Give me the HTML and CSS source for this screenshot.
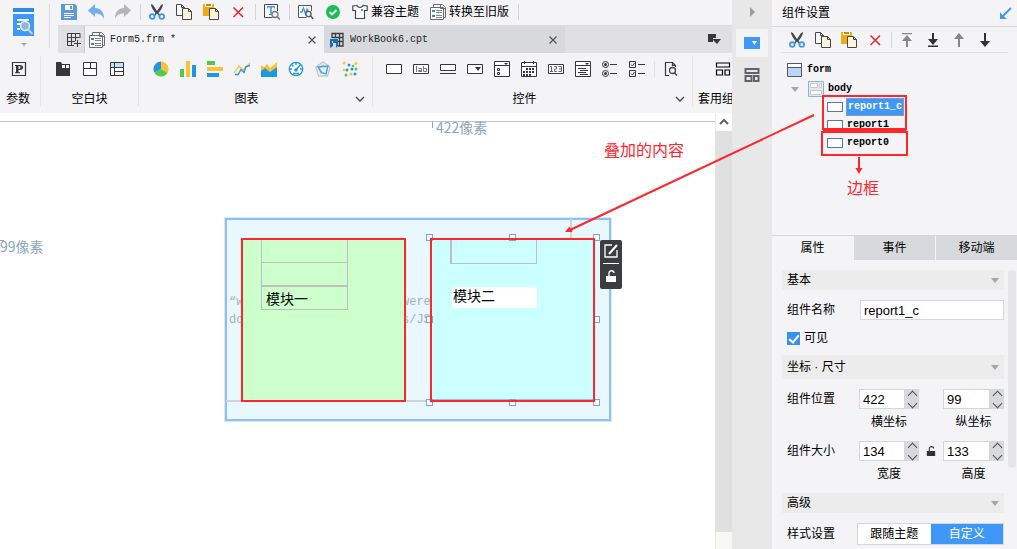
FILE: index.html
```html
<!DOCTYPE html>
<html lang="zh-CN">
<head>
<meta charset="utf-8">
<title>Form5.frm</title>
<link rel="stylesheet" href="styles.css">
</head>
<body>
<svg class="sprite" aria-hidden="true">
  <symbol id="save" viewBox="0 0 16 16"><path fill="#5b9bdc" d="M0 0h14l2 2v14H0z"/><path fill="#fff" d="M4 1h8v5H4zM3 9h10v1H3zM3 11h10v1H3zM3 13h7v1H3z"/><path fill="#5b9bdc" d="M9 2h2v3H9z"/></symbol>
  <symbol id="undo" viewBox="0 0 16 16"><path fill="#72aef0" d="M0 6.500 7 0v4c6 0 9 4 9 11-2-4-4-5.500-9-5.500V13z"/></symbol>
  <symbol id="redo" viewBox="0 0 16 16"><path fill="#b5b5b7" d="M16 6.500 9 0v4C3 4 0 8 0 15c2-4 4-5.500 9-5.500V13z"/></symbol>
  <symbol id="cut" viewBox="0 0 16 16"><path fill="#45484d" d="M2 0 4 1l4 6 4-6 2-1c0 3-2 6-4.500 9l2 2-1.500 1-2-2.500L6 12l-1.500-1 2-2C4 6 2 3 2 0z"/><g fill="none" stroke="#3d98f7" stroke-width="1.800"><circle cx="3.200" cy="12.500" r="2.400"/><circle cx="12.800" cy="12.500" r="2.400"/></g></symbol>
  <symbol id="copy" viewBox="0 0 16 16"><g fill="#fff" stroke="#45484d"><path d="M.5.5h5l3 3v8h-8z"/><path d="M5.500.5v3h3" fill="none"/></g><path fill="#fff5da" stroke="#45484d" d="M6.500 4.500h6l3 3v8h-9z"/><path d="M12.500 4.500v3h3" fill="none" stroke="#45484d"/></symbol>
  <symbol id="paste" viewBox="0 0 16 16"><path fill="#f2ab13" d="M0 0h11v12H0z"/><path fill="#fff" d="M2 0h7v3H2z"/><path fill="#d98300" d="M3 0h5v2H3z"/><path fill="#fff5da" stroke="#45484d" d="M6.500 4.500h6l3 3v8h-9z"/><path d="M12.500 4.500v3h3" fill="none" stroke="#45484d"/></symbol>
  <symbol id="del" viewBox="0 0 16 16"><path d="m3.500 3.500 9.500 9.500M13 3.500 3.500 13" fill="none" stroke="#e8232b" stroke-width="1.500"/></symbol>
  <symbol id="find" viewBox="0 0 16 16"><path fill="#fff" stroke="#45484d" d="M13.500 7V.5H.5v13h8"/><path fill="#3d98f7" d="M3 2h8v2.500h-1V3.500H7.800V10H9v1H5v-1h1.200V3.500H4v1H3z"/><circle cx="11" cy="10.500" r="3" fill="#f4f4f7" stroke="#777b80" stroke-width="1.300"/><path d="m13 12.500 3 3" stroke="#777b80" stroke-width="1.600"/></symbol>
  <symbol id="wave" viewBox="0 0 16 16"><path fill="#fff" stroke="#55595e" d="M13.500 7V1.500H.5v12h8"/><path fill="none" stroke="#3d98f7" stroke-width="1.300" d="M2 8h2l1.500-4 2 6L9 5l1 2"/><circle cx="10.500" cy="10" r="2.600" fill="#f4f4f7" stroke="#55595e" stroke-width="1.300"/><path d="m12.500 12 2.800 3" stroke="#55595e" stroke-width="1.600"/></symbol>
  <symbol id="ok" viewBox="0 0 16 16"><circle cx="8" cy="8" r="7" fill="#18bf50"/><path d="m4.500 8 2.500 2.500L11.500 6" fill="none" stroke="#fff" stroke-width="1.800"/></symbol>
  <symbol id="shirt" viewBox="0 0 16 16"><path fill="#fff" stroke="#45484d" stroke-width="1.200" d="M5 1.500.8 2v4.500H3.500v8h9v-8h2.700V2L11 1.500C10 4 6 4 5 1.500z"/><path fill="#3d98f7" d="M9 5h2v2H9z"/></symbol>
  <symbol id="form" viewBox="0 0 16 16"><path fill="none" stroke="#686c70" d="M3.500 3V.5h9l3 3v10H14"/><path fill="#fff" stroke="#686c70" d="M.5 3.500h13v12H.5z"/><path stroke="#686c70" fill="none" d="M10.500 1v3.500H15"/><path fill="#3d83c9" d="M2 6h3v2H2zM2 11h3v2H2z"/><path stroke="#85898d" d="M6 6.500h6M6 8.500h6M6 11.500h6M6 13.500h6"/></symbol>
  <symbol id="gridplus" viewBox="0 0 16 16"><path fill="none" stroke="#3a3c40" d="M14 6V1.500H1.500v12H8M1.500 5.500h12M1.500 9.500H9M5.500 1.500v12M9.500 1.500V9M11.500 8v7M8 11.500h7"/></symbol>
  <symbol id="book" viewBox="0 0 16 16"><path fill="none" stroke="#3a3c40" stroke-width="1.300" d="M3 6V1.500h11V14H9M3 5.500h11M6.500 1.500v4M10.500 1.500V14M9 9.500h5"/><path fill="#1470b8" d="M1 7h8v7l-2 2v-5H4v3l-3 2z"/><path fill="#d8d9dd" d="M3 9h1v2H3z"/></symbol>
  <symbol id="x" viewBox="0 0 16 16"><path d="m4.500 4.500 7 7m0-7-7 7" fill="none" stroke="#505256" stroke-width="1.200"/></symbol>
  <symbol id="list" viewBox="0 0 16 16"><path fill="#36383c" d="M2 2h8v4H7v4H2z"/><path fill="#36383c" d="M6 7h9l-4 5z"/></symbol>
  <symbol id="param" viewBox="0 0 16 16"><path fill="none" stroke="#34363a" stroke-width="1.200" d="M1.500 1.500h13v13h-13z"/><path fill="#34363a" d="M4 4h5c4 0 4 5 0 5H7.500v2.300H9v1H4v-1h1V5H4zm3.500 1v3H8c2 0 2-3 0-3z"/></symbol>
  <symbol id="tabs" viewBox="0 0 16 16"><path fill="#36383c" d="M1 1h5l1 2h8v12H1z"/><path fill="#fff" d="M7 4h3v3H7zM11 4h3v3h-3z"/></symbol>
  <symbol id="blocks" viewBox="0 0 16 16"><path fill="#fff" stroke="#36383c" d="M1.500 1.500h13v13h-13zM1.500 7.500h13M8.500 1.500v6"/></symbol>
  <symbol id="blocks2" viewBox="0 0 16 16"><path fill="#fff" d="M1 1h14v14H1z"/><path fill="#bce4fa" d="M1 1h14v5H1z"/><path fill="none" stroke="#36383c" d="M1.500 1.500h13v13h-13zM1.500 6.500h13M5.500 1.500v13M5.500 10.500h9"/></symbol>
  <symbol id="pie" viewBox="0 0 16 16"><path fill="#2097e4" d="M8 8V.5A7.500 7.500 0 0 0 1.500 11.700z"/><path fill="#fcc236" d="M8 8V.5a7.500 7.500 0 0 1 6.500 11.200z"/><path fill="#54c84d" d="m8 8 6.500 3.700a7.500 7.500 0 0 1-13 0z"/></symbol>
  <symbol id="bars" viewBox="0 0 16 16"><path fill="#54c84d" d="M0 8h4v8H0z"/><path fill="#fcc236" d="M6 0h4v16H6z"/><path fill="#2097e4" d="M12 4h4v12h-4z"/></symbol>
  <symbol id="hbars" viewBox="0 0 16 16"><path fill="#54c84d" d="M0 0h8v4H0z"/><path fill="#fcc236" d="M0 6h16v4H0z"/><path fill="#2097e4" d="M0 12h12v4H0z"/></symbol>
  <symbol id="lines" viewBox="0 0 16 16"><path fill="none" stroke="#fcc236" stroke-width="1.300" d="m0 12 5-7 4 4 7-7"/><path fill="none" stroke="#2097e4" stroke-width="1.300" d="M1 13.500h3l3-5 3 3 2-6 4-1"/></symbol>
  <symbol id="area" viewBox="0 0 16 16"><path fill="#fcc236" d="m0 4 3 2 3-3 3 4 7-6v10H0z"/><path fill="#2097e4" d="m0 10 4-3 5 4 7-5v10H0z"/></symbol>
  <symbol id="gauge" viewBox="0 0 16 16"><circle cx="8" cy="8" r="6.700" fill="#fff" stroke="#2097e4" stroke-width="1.300"/><path fill="none" stroke="#2097e4" stroke-width="1.400" d="M8 1v3M1 8h3m8 0h3M3.500 3.500l2 2M12.500 3.500 8 9M5 12.500h6"/><circle cx="8" cy="9" r="1.800" fill="#2097e4"/></symbol>
  <symbol id="radar" viewBox="0 0 16 16"><path fill="none" stroke="#c2c5c9" stroke-width="1.300" d="m8 1 7 5-2.500 9h-9L1 6zM8 4l4 3-1.500 5h-5L4 7z"/><path fill="#d8effb" fill-opacity=".6" stroke="#43a8e8" stroke-width="1.400" d="m3 6 10-1-2 8-4-1z"/></symbol>
  <symbol id="scatter" viewBox="0 0 16 16"><g fill="#2097e4"><circle cx="7" cy="4" r="1.500"/><circle cx="10" cy="8" r="1.500"/><circle cx="5" cy="9" r="1.500"/><circle cx="13" cy="13" r="1.500"/></g><g fill="#fcc236"><circle cx="2" cy="2" r="1.500"/><circle cx="14" cy="2.500" r="1.500"/><circle cx="2" cy="9" r="1.300"/><circle cx="9" cy="13" r="1.500"/></g><g fill="#54c84d"><circle cx="11" cy="5" r="1.300"/><circle cx="14" cy="8" r="1.500"/><circle cx="4" cy="14" r="1.500"/></g></symbol>
  <symbol id="w-text" viewBox="0 0 16 16"><path fill="#fff" stroke="#36383c" d="M.5 3.500h15v9H.5z"/></symbol>
  <symbol id="w-label" viewBox="0 0 16 16"><path fill="#fff" stroke="#36383c" d="M.5 3.500h15v9H.5z"/><path fill="none" stroke="#77797d" d="M3.500 5v6M8.500 11V7.500h-3M8 9.500H5.500v1h3M10.500 5v5.500h3v-3h-3"/></symbol>
  <symbol id="w-area" viewBox="0 0 16 16"><path fill="#fff" stroke="#36383c" d="M.5 3.500h15v6H.5z"/><path stroke="#36383c" d="M0 12.500h16"/></symbol>
  <symbol id="w-combo" viewBox="0 0 16 16"><path fill="#fff" stroke="#36383c" d="M.5 3.500h15v9H.5z"/><path fill="#36383c" d="M8 6h6l-3 4z"/></symbol>
  <symbol id="w-tree" viewBox="0 0 16 16"><path fill="#fff" stroke="#36383c" d="M.5.5h15v15H.5zM.5 4.500h15M3.500 7.500h2v2h-2zM3.500 11.500h2v2h-2z"/><path fill="#36383c" d="M10 2h4l-2 2z"/></symbol>
  <symbol id="w-date" viewBox="0 0 16 16"><path fill="#fff" stroke="#36383c" d="M.5 1.500h15v14H.5zM.5 5.500h15M3.500 0v3M12.500 0v3"/><path stroke="#36383c" stroke-width="2" stroke-dasharray="2 1" d="M5 8h8M2 11h11M2 14h8"/></symbol>
  <symbol id="w-num" viewBox="0 0 16 16"><path fill="#fff" stroke="#36383c" d="M.5 3.500h15v9H.5z"/><path fill="none" stroke="#66686c" d="M2 5.500h1.500v5M2 10.500h3M6 5.500h2.500v2.500h-2v2.500H9M10.500 5.500h3v5h-3M11 8h2.500"/></symbol>
  <symbol id="w-list" viewBox="0 0 16 16"><path fill="#fff" stroke="#36383c" d="M.5.5h15v15H.5zM.5 4.500h15M3 7.500h8M5 9.500h8M3 11.500h8M5 13.500h8"/><path fill="#36383c" d="M10 2h4l-2 2z"/></symbol>
  <symbol id="w-radio" viewBox="0 0 16 16"><g fill="none" stroke="#36383c"><circle cx="3.500" cy="3.500" r="3"/><circle cx="3.500" cy="12.500" r="3"/><path d="M8 3.500h7M8 12.500h7"/></g><circle cx="3.500" cy="3.500" r="1.500" fill="#36383c"/><circle cx="3.500" cy="12.500" r="1.500" fill="#36383c"/></symbol>
  <symbol id="w-check" viewBox="0 0 16 16"><path fill="none" stroke="#36383c" d="M.5.5h6v6h-6zM.5 9.500h6v6h-6zM9 3.500h7M9 12.500h7M2 3.500l1.500 1.500L5.500 2M2 12.500 3.500 14l2-3"/></symbol>
  <symbol id="w-query" viewBox="0 0 16 16"><path fill="none" stroke="#36383c" stroke-width="1.200" d="M6 14.500H2.500V1.500h7l3 3V6M9.500 1.500v3h3"/><circle cx="9.500" cy="9.500" r="3" fill="none" stroke="#45484d" stroke-width="1.300"/><path stroke="#45484d" stroke-width="1.600" d="m11.500 12 2.500 2.500"/></symbol>
  <symbol id="layout" viewBox="0 0 16 16"><path fill="none" stroke="currentColor" stroke-width="var(--line, 1.200)" d="M1.500 2h13v4h-13zM1.500 9h6v5h-6zM10 9h4.500v5H10z"/></symbol>
  <symbol id="chev" viewBox="0 0 16 16"><path fill="none" stroke="#45484d" stroke-width="1.400" d="m4 6 4 4 4-4"/></symbol>
  <symbol id="up" viewBox="0 0 16 16"><path fill="currentColor" d="M7 15V7H3l5-6 5 6H9v8z"/></symbol>
  <symbol id="top" viewBox="0 0 16 16"><path fill="#85878b" d="M3 1h10v1.300H3zM7 15V9H3l5-6 5 6H9v6z"/></symbol>
  <symbol id="bottom" viewBox="0 0 16 16"><path fill="#303236" d="M3 13.500h10V15H3zM7 1v6H3l5 6 5-6H9V1z"/></symbol>
  <symbol id="lock" viewBox="0 0 12 14"><path fill="currentColor" d="M1 7h10v6H1z"/><path fill="none" stroke="currentColor" stroke-width="1.300" d="M4 8V4c0-3 5-3 5 0"/></symbol>
</svg>

<div class="app">
  <main class="designer">
    <header class="top">
      <button class="template" aria-label="模板">
        <svg viewBox="0 0 22 40"><path fill="#2f89e8" d="M0 0h21v4H0z"/><path fill="#3d98f7" d="M0 6h21v22H0z"/><path stroke="#fff" stroke-width="2" d="M4 12h12M4 16h4M4 21h3"/><circle cx="12" cy="18" r="4.500" fill="#8fb6dc" stroke="#e8eef5" stroke-width="1.500"/><path stroke="#c9d3de" stroke-width="2" d="m15.500 22 4 4"/><path fill="#a5a5a7" d="M8 35h6l-3 3z"/></svg>
      </button>
      <div class="top-main">
        <div class="toolbar">
          <button aria-label="保存"><svg><use href="#save"/></svg></button>
          <button aria-label="撤销"><svg><use href="#undo"/></svg></button>
          <button aria-label="重做"><svg><use href="#redo"/></svg></button>
          <i class="sep"></i>
          <button aria-label="剪切"><svg><use href="#cut"/></svg></button>
          <button aria-label="复制"><svg><use href="#copy"/></svg></button>
          <button aria-label="粘贴"><svg><use href="#paste"/></svg></button>
          <button aria-label="删除"><svg><use href="#del"/></svg></button>
          <i class="sep"></i>
          <button aria-label="查找"><svg><use href="#find"/></svg></button>
          <i class="sep"></i>
          <button aria-label="检测"><svg><use href="#wave"/></svg></button>
          <button aria-label="通过"><svg><use href="#ok"/></svg></button>
          <button><svg><use href="#shirt"/></svg>兼容主题</button>
          <button><svg><use href="#form"/></svg>转换至旧版</button>
          <i class="sep"></i>
        </div>
        <div class="files">
          <button class="new" aria-label="新建"><svg><use href="#gridplus"/></svg></button>
          <div class="file active"><svg><use href="#form"/></svg><span>Form5.frm *</span><button aria-label="关闭 Form5.frm"><svg><use href="#x"/></svg></button></div>
          <div class="file"><svg><use href="#book"/></svg><span>WorkBook6.cpt</span><button aria-label="关闭 WorkBook6.cpt"><svg><use href="#x"/></svg></button></div>
          <button class="more" aria-label="全部文件"><svg><use href="#list"/></svg></button>
        </div>
      </div>
    </header>

    <section class="ribbon">
      <div class="group g-param"><div class="icons"><button aria-label="参数面板"><svg><use href="#param"/></svg></button></div><div class="caption">参数</div></div>
      <div class="group g-blank"><div class="icons"><button aria-label="标签块"><svg><use href="#tabs"/></svg></button><button aria-label="绝对画布块"><svg><use href="#blocks"/></svg></button><button aria-label="报表块"><svg><use href="#blocks2"/></svg></button></div><div class="caption">空白块</div></div>
      <div class="group g-chart"><div class="icons"><button aria-label="饼图"><svg><use href="#pie"/></svg></button><button aria-label="柱形图"><svg><use href="#bars"/></svg></button><button aria-label="条形图"><svg><use href="#hbars"/></svg></button><button aria-label="折线图"><svg><use href="#lines"/></svg></button><button aria-label="面积图"><svg><use href="#area"/></svg></button><button aria-label="仪表盘"><svg><use href="#gauge"/></svg></button><button aria-label="雷达图"><svg><use href="#radar"/></svg></button><button aria-label="散点图"><svg><use href="#scatter"/></svg></button></div><div class="caption">图表<button aria-label="更多图表"><svg><use href="#chev"/></svg></button></div></div>
      <div class="group g-widget"><div class="icons"><button aria-label="文本"><svg><use href="#w-text"/></svg></button><button aria-label="标签"><svg><use href="#w-label"/></svg></button><button aria-label="按钮"><svg><use href="#w-area"/></svg></button><button aria-label="下拉框"><svg><use href="#w-combo"/></svg></button><button aria-label="下拉树"><svg><use href="#w-tree"/></svg></button><button aria-label="日期"><svg><use href="#w-date"/></svg></button><button aria-label="数字"><svg><use href="#w-num"/></svg></button><button aria-label="列表"><svg><use href="#w-list"/></svg></button><button aria-label="单选"><svg><use href="#w-radio"/></svg></button><button aria-label="复选"><svg><use href="#w-check"/></svg></button><i class="sep"></i><button aria-label="查询"><svg><use href="#w-query"/></svg></button></div><div class="caption">控件<button aria-label="更多控件"><svg><use href="#chev"/></svg></button></div></div>
      <div class="group g-suite"><div class="icons"><button aria-label="套用组件"><svg><use href="#layout"/></svg></button></div><div class="caption">套用组</div></div>
    </section>

    <section class="workspace">
      <div class="canvas">
        <div class="measure measure-x">422像素</div>
        <div class="measure measure-y">99像素</div>
        <div class="body-block">
          <div class="report0"></div>
          <span class="hint hint-a">“w</span><span class="hint hint-b">do</span>
          <span class="hint hint-c">were</span><span class="hint hint-d">s/JS</span>
          <div class="module green"><div class="cell"></div><div class="cell"></div><div class="cell">模块一</div></div>
          <div class="module cyan"><div class="cell"></div><div class="title">模块二</div></div>
          <i class="handle h1"></i><i class="handle h2"></i><i class="handle h3"></i><i class="handle h4"></i><i class="handle h5"></i><i class="handle h6"></i><i class="handle h7"></i><i class="handle h8"></i>
          <div class="quick">
            <button aria-label="编辑"><svg viewBox="0 0 16 16"><path fill="none" stroke="#fff" stroke-width="1.300" d="M9 2H2v12h12V7"/><path stroke="#fff" stroke-width="2" d="m6 11 8-9"/></svg></button>
            <button aria-label="锁定"><svg><use href="#lock"/></svg></button>
          </div>
        </div>
      </div>
      <div class="scroll"><button aria-label="向上滚动"><svg viewBox="0 0 16 16"><path fill="none" stroke="#606266" stroke-width="2" d="m4 10 4-4 4 4"/></svg></button><div class="track"></div><div class="rest"></div></div>
    </section>
  </main>

  <nav class="rail">
    <button class="fold" aria-label="收起"><svg viewBox="0 0 16 16"><path fill="#9b9b9d" d="m6 3 5 5-5 5z"/></svg></button>
    <button class="current" aria-label="组件设置"><svg viewBox="0 0 16 16"><path fill="#3d98f7" d="M0 2h16v12H0z"/><path fill="#fff" d="M8 6h5l-2.500 4z"/></svg></button>
    <button class="lib" aria-label="组件库"><svg><use href="#layout"/></svg></button>
  </nav>

  <aside class="panel">
    <h1>组件设置<button aria-label="弹出"><svg viewBox="0 0 16 16"><path fill="none" stroke="#3d98f7" stroke-width="1.800" d="m13 3-9 9"/><path fill="#3d98f7" d="M2 7v7h7l-2.500-2-2.500-2.500z"/></svg></button></h1>
    <div class="tree-tools">
      <button aria-label="剪切"><svg><use href="#cut"/></svg></button>
      <button aria-label="复制"><svg><use href="#copy"/></svg></button>
      <button aria-label="粘贴"><svg><use href="#paste"/></svg></button>
      <button aria-label="删除"><svg><use href="#del"/></svg></button>
      <i class="sep"></i>
      <button aria-label="置于顶层"><svg><use href="#top"/></svg></button>
      <button aria-label="置于底层"><svg><use href="#bottom"/></svg></button>
      <button class="raise" aria-label="上移一层"><svg><use href="#up"/></svg></button>
      <button class="lower" aria-label="下移一层"><svg><use href="#up"/></svg></button>
    </div>
    <ul class="tree">
      <li class="node root"><svg viewBox="0 0 16 16"><path fill="#bcd4f5" stroke="#55585c" d="M.5 1.500h14v13H.5z"/><path fill="#fff" stroke="#55585c" d="M.5 1.500h14v4H.5z"/></svg><span>form</span></li>
      <li class="node branch"><svg class="twist" viewBox="0 0 8 8"><path fill="#a5a5a7" d="M0 2h8L4 7z"/></svg><svg viewBox="0 0 16 16"><path fill="#e6e9ec" stroke="#86b7d2" d="M.5.5h15v15H.5z"/><path fill="#fff" stroke="#c6c8ca" d="M2.500 2.500h7v4h-7zM11.500 2.500h2v4h-2zM2.500 9.500h11v4h-11z"/></svg><span>body</span></li>
      <li class="node leaf selected"><i></i><span>report1_c</span></li>
      <li class="node leaf"><i></i><span>report1</span></li>
      <li class="node leaf"><i></i><span>report0</span></li>
    </ul>
    <div class="tabs" role="tablist">
      <button role="tab" aria-selected="true">属性</button><button role="tab" aria-selected="false">事件</button><button role="tab" aria-selected="false">移动端</button>
    </div>
    <div class="props">
      <form class="fields">
        <button type="button" class="section">基本</button>
        <div class="row name"><label for="name">组件名称</label><input id="name" type="text" value="report1_c"></div>
        <label class="visible"><input type="checkbox" checked>可见</label>
        <button type="button" class="section tall">坐标 · 尺寸</button>
        <div class="row pair">
          <span>组件位置</span>
          <div class="spin"><input id="px" type="text" value="422"><div><button type="button" aria-label="增加"></button><button type="button" aria-label="减少"></button></div></div>
          <span></span>
          <div class="spin"><input id="py" type="text" value="99"><div><button type="button" aria-label="增加"></button><button type="button" aria-label="减少"></button></div></div>
          <label class="under first" for="px">横坐标</label><label class="under" for="py">纵坐标</label>
        </div>
        <div class="row pair">
          <span>组件大小</span>
          <div class="spin"><input id="sw" type="text" value="134"><div><button type="button" aria-label="增加"></button><button type="button" aria-label="减少"></button></div></div>
          <button type="button" class="ratio" aria-label="锁定比例"><svg><use href="#lock"/></svg></button>
          <div class="spin"><input id="sh" type="text" value="133"><div><button type="button" aria-label="增加"></button><button type="button" aria-label="减少"></button></div></div>
          <label class="under first" for="sw">宽度</label><label class="under" for="sh">高度</label>
        </div>
        <button type="button" class="section">高级</button>
        <div class="row style"><span>样式设置</span><div class="segment"><button type="button">跟随主题</button><button type="button" class="on">自定义</button></div></div>
      </form>
      <div class="thumb"></div>
    </div>
  </aside>

  <svg class="notes" viewBox="0 0 1017 549">
    <g fill="none" stroke="#ff262c" stroke-width="2">
      <path d="M242 239h163v162H242zM431 239h163v162H431zM823 96h83v33h-83zM822 132h85v23h-85z"/>
      <path d="M823 130.500h83M814 115 570 230M859 157v13"/>
    </g>
    <path fill="#ff262c" d="m565 232 4.500-5.500 3 5.500zM855.500 168h7l-3.500 6z"/>
    <g fill="#ff262c" class="note-text"><text x="604" y="156">叠加的内容</text><text x="847" y="194">边框</text></g>
  </svg>
</div>
</body>
</html>
```
FILE: styles.css
```css
* { box-sizing: border-box; }
body { margin: 0; font: 12px/16px "Liberation Sans", "Noto Sans CJK SC", sans-serif; color: #000; background: #fff; }
button { border: 0; padding: 0; margin: 0; background: none; font: inherit; color: inherit; }
svg { display: block; flex: none; width: 16px; height: 16px; }
.sprite { position: absolute; width: 0; height: 0; }
.app { position: relative; display: grid; grid-template-columns: minmax(0, 1fr) 40px 245px; height: 100vh; overflow: hidden; }
.sep { flex: none; width: 1px; height: 16px; background: #d4d4d6; }

.designer { display: flex; flex-direction: column; min-width: 0; }
.top { display: flex; background: #f4f4f7; }
.template { width: 50px; padding: 3px 0 0 13px; border-right: 1px solid #dcdcde; margin: 4px 8px 5px 0; }
.template svg { width: 22px; height: 40px; }
.top-main { flex: 1; min-width: 0; }
.toolbar { display: flex; align-items: center; gap: 11px; height: 25px; padding: 0 0 1px 3px; }
.toolbar button { display: flex; align-items: center; gap: 3px; }
.toolbar .sep { margin: 0 -3px 0 -2px; }
.files { display: flex; height: 28px; background: #e0e0e2; border-top: 1px solid #dcdcde; }
.new { width: 27px; padding-left: 8px; border-right: 1px solid #cacacc; }
.file { display: flex; align-items: center; gap: 5px; width: 240px; padding: 0 4px; background: #d8d9dd; font: 10px/16px "Liberation Mono", monospace; color: #222; }
.file.active { background: #f4f4f7; border-right: 1px solid #d8d9dd; }
.file button { margin-left: auto; }
.more { margin-left: auto; padding: 0 10px; }

.ribbon { display: flex; height: 60px; background: #f4f4f7; overflow: hidden; }
.group { flex: none; position: relative; margin: 3px 0 7px; border-right: 1px solid #e6e5dc; }
.icons { display: flex; gap: 11px; height: 26px; align-items: center; }
.icons .sep { margin: 0 -3px 0 -2px; background: #e2e2da; }
.caption { display: flex; justify-content: center; align-items: center; height: 16px; margin-top: 9px; white-space: nowrap; }
.caption button { position: absolute; right: 4px; }
.g-param { width: 41px; }
.g-param .icons { padding-left: 11px; }
.g-param .caption { padding-right: 4px; }
.g-blank { width: 98px; }
.g-blank .icons { padding-left: 14px; }
.g-chart { width: 234px; }
.g-chart .icons { padding-left: 14px; }
.g-chart .caption { padding-right: 18px; }
.g-widget { width: 320px; }
.g-widget .icons { padding-left: 13px; }
.g-widget .caption { padding-right: 16px; }
.g-suite { width: 60px; border: 0; }
.g-suite .icons { padding-left: 22px; }
.g-suite .caption { justify-content: flex-start; padding-left: 5px; }

.workspace { flex: 1; display: flex; min-height: 0; }
.canvas { position: relative; flex: 1; margin-top: 8px; border-top: 1px solid #c4c4c6; }
.measure { position: absolute; font: 14px/20px "Noto Sans CJK SC", sans-serif; color: #8ba5bf; }
.measure-x { left: 436px; top: -5px; }
.measure-x::before { content: ""; position: absolute; left: -4px; top: 5px; width: 1px; height: 6px; background: #8ba5bf; }
.measure-y { left: 0; top: 114px; }
.measure-y::before { content: ""; position: absolute; top: 4px; left: 0; width: 4px; height: 1px; background: #8ba5bf; }
.body-block { position: absolute; left: 225px; top: 96px; width: 386px; height: 203px; background: #e9f7fe; border: 2px solid #8dc0f8; outline: 1px solid #dceaf2; }
.body-block > * { position: absolute; }
.report0 { left: -1px; top: -1px; width: 346px; height: 183px; border: solid #ccd5da; border-width: 0 2px 2px 0; }
.module { width: 162px; height: 161px; top: 20px; }
.green { left: 15px; background: #ccffcc; }
.cyan { left: 204px; background: #ccffff; border-bottom: 2px solid #8dc0f8; }
.cell { width: 87px; height: 23px; margin-left: 19px; border: 1px solid #bdbdc2; border-top-width: 0; padding-left: 4px; font: 14px/22px "Noto Sans CJK SC", sans-serif; }
.green .cell:nth-child(2) { height: 24px; border-bottom-width: 2px; }
.cyan .cell { height: 24px; border-left-width: 2px; }
.title { width: 85px; height: 21px; margin: 23px 0 0 21px; padding-left: 1px; background: #fff; font: 14px/16px "Noto Sans CJK SC", sans-serif; }
.hint { font: 12px/14px "Liberation Mono", monospace; color: #a4b1b9; }
.hint-a { left: 2px; top: 75px; }
.hint-b { left: 2px; top: 93px; }
.hint-c { left: 175px; top: 75px; }
.hint-d { left: 175px; top: 93px; }
.handle { width: 7px; height: 7px; background: #fff; border: 1px solid #88a2bd; }
.h1, .h4, .h6 { left: 199px; }
.h2, .h7 { left: 282px; }
.h3, .h5, .h8 { left: 366px; }
.h1, .h2, .h3 { top: 14px; }
.h4, .h5 { top: 96px; }
.h6, .h7, .h8 { top: 179px; }
.quick { left: 373px; top: 20px; width: 22px; padding: 3px; background: #3a3e43; border-radius: 2px; color: #fff; }
.quick button { display: block; width: 16px; }
.quick button + button { border-top: 1px solid #fff; margin-top: 4px; padding: 5px 2px 3px; }
.quick button + button svg { width: 12px; height: 14px; }
.scroll { display: flex; flex-direction: column; width: 17px; border-left: 1px solid #e7e7df; background: #f8f8f7; }
.scroll button { height: 18px; background: #fff; }
.track { flex: 1; background: #e0e0e0; }
.rest { height: 17px; }

.rail { background: #e8e8e8; display: flex; flex-direction: column; padding: 0 4px; }
.rail button { display: flex; justify-content: center; align-items: center; height: 28px; }
.rail .fold { height: 24px; margin-bottom: 5px; }
.rail .current { width: 32px; background: #f4f4f7; }
.rail .lib { margin-top: 4px; color: #606268; --line: 2; }

.panel { display: flex; flex-direction: column; min-height: 0; background: #f4f4f7; }
.panel h1 { display: flex; align-items: center; justify-content: space-between; height: 27px; margin: 0; padding: 0 3px 0 10px; border-bottom: 1px solid #dadadc; font: inherit; }
.tree-tools { display: flex; align-items: center; gap: 10px; height: 26px; margin: 0 9px 0 10px; padding-left: 7px; border-bottom: 1px solid #dcdcde; }
.tree-tools .sep { margin: 0 -3px 0 -2px; }
.raise { color: #85878b; }
.lower { color: #303236; transform: rotate(180deg); }
.tree { flex: none; height: 182px; margin: 0; padding: 7px 0 0 15px; list-style: none; }
.node { display: flex; align-items: center; height: 18px; font: bold 10px/18px "Liberation Mono", monospace; }
.node span { padding: 0 1px; margin-left: 3px; }
.root, .branch { height: 19px; }
.branch { padding-left: 4px; }
.branch .twist { width: 8px; height: 8px; margin-right: 9px; }
.leaf { padding-left: 40px; }
.leaf i { width: 16px; height: 10px; background: #fff; border: 1px solid #5877aa; }
.selected span { background: #3f98f8; border: 1px solid #7d9cc8; padding: 0 1px; line-height: 16px; color: #fff; }
.tabs { display: grid; grid-template-columns: repeat(3, 1fr); gap: 1px; border-top: 1px solid #d8d9dd; flex: none; }
.tabs button { height: 24px; background: #d8d9dd; }
.tabs [aria-selected="true"] { background: #f4f4f7; }
.props { display: flex; flex: 1; min-height: 0; overflow: hidden; gap: 4px; padding: 10px 1px 0 10px; }
.fields { flex: 1; min-width: 0; }
.thumb { width: 8px; height: 198px; border-radius: 4px; background: #e6e6e8; }
.section { display: flex; align-items: center; justify-content: space-between; width: 100%; height: 20px; padding: 0 5px; background: #ececec; }
.section.tall { height: 24px; }
.section::after { content: ""; border: 4px solid transparent; border-top: 5px solid #a5a5a7; border-bottom: 0; }
.row { display: grid; align-items: center; padding-left: 5px; }
.fields input[type="text"] { width: 100%; min-width: 0; height: 20px; padding: 0 3px; border: 1px solid #d5d6da; background: #fff; font: 13px/16px "Liberation Sans", sans-serif; color: #000; }
.name { grid-template-columns: 73px 1fr; margin-top: 10px; }
.visible { display: flex; align-items: center; gap: 4px; margin: 10px 0 9px 5px; height: 16px; }
.visible input { appearance: none; width: 13px; height: 13px; margin: 0; background: #3492f2; display: grid; place-items: center; }
.visible input::after { content: ""; width: 4px; height: 8px; border: solid #fff; border-width: 0 2px 2px 0; transform: rotate(40deg); }
.pair { grid-template-columns: 72px 60px 24px 1fr; row-gap: 5px; margin: 10px 0 11px; }
.spin { display: flex; }
.spin > div { flex: none; width: 14px; background: #d8d9dd; display: grid; }
.spin button { display: grid; place-items: center; height: 10px; }
.spin button::after { content: ""; width: 6px; height: 6px; border: solid #505256; border-width: 1px 0 0 1px; transform: translateY(1px) rotate(45deg); }
.spin button + button::after { transform: translateY(-1px) rotate(225deg); }
.under { text-align: center; grid-column: 4; }
.under.first { grid-column: 2; }
.ratio { color: #303236; justify-self: center; }
.ratio svg { width: 10px; height: 12px; }
.style { grid-template-columns: 70px 1fr; margin-top: 10px; }
.segment { display: grid; grid-template-columns: 1fr 1fr; border: 1px solid #d5d6da; background: #fff; }
.segment button { height: 20px; }
.segment .on { background: #3f98f8; color: #fff; }

.notes { position: absolute; left: 0; top: 0; width: 1017px; height: 549px; pointer-events: none; }
.note-text { font: 16px "Noto Sans CJK SC", sans-serif; }
```
